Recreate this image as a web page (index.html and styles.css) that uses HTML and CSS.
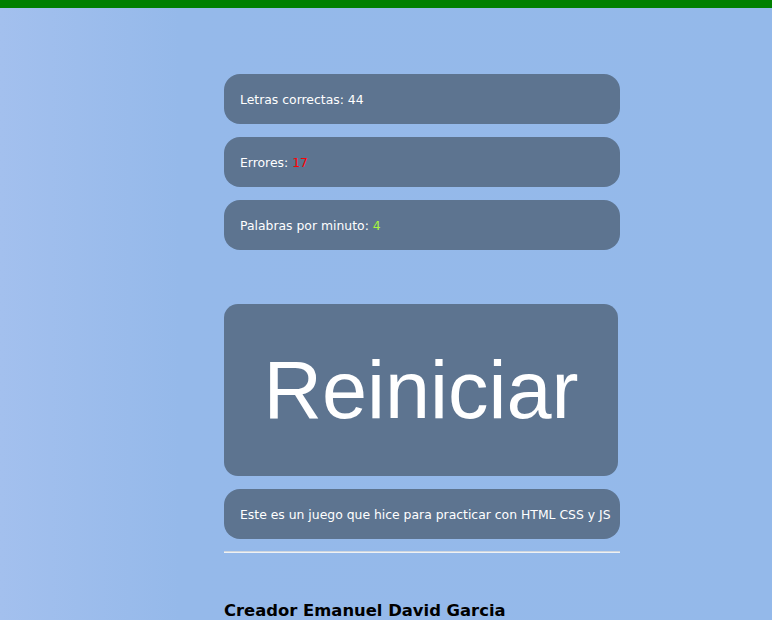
FILE: index.html
```html
<!DOCTYPE html>
<html>
<head>
    <meta charset="utf-8" />
    <title>Juego de escritura</title>
    <link rel="stylesheet" href="styles.css">
</head>
<body>
    <div class="topbar"></div>

    <main class="game">
        <div class="stat">Letras correctas: <span id="correctas">44</span></div>
        <div class="stat">Errores: <span id="errores" class="bad">17</span></div>
        <div class="stat">Palabras por minuto: <span id="ppm" class="good">4</span></div>

        <button class="restart" id="reiniciar">Reiniciar</button>

        <div class="stat info">Este es un juego que hice para practicar con HTML CSS y JS</div>
        <hr>
        <h3 class="author">Creador Emanuel David Garcia</h3>
    </main>
</body>
</html>
```

FILE: styles.css
```css
body {
    margin: 0;
    font-family: "Comic Sans MS", "DejaVu Sans", sans-serif;
    background: linear-gradient(to right, #a3c0ee 0, #95b9ea 180px, #94b9ea 100%);
    min-height: 100vh;
}

.topbar {
    height: 8px;
    background-color: #008000;
}

.game {
    width: 396px;
    margin-left: 224px;
    padding-top: 66px;
    display: flex;
    flex-direction: column;
}

.stat {
    height: 50px;
    box-sizing: border-box;
    padding: 0 16px;
    display: flex;
    align-items: center;
    background-color: #5d7490;
    border-radius: 16px;
    color: #fff;
    font-size: 12.4px;
    white-space: pre;
    margin-bottom: 13px;
}

.bad {
    color: #ff0000;
}

.good {
    color: #a8f53c;
}

.restart {
    width: 394px;
    height: 172px;
    margin-top: 41px;
    margin-bottom: 13px;
    border: none;
    border-radius: 14px;
    background-color: #5d7490;
    color: #fff;
    font-family: "Liberation Sans", Arial, sans-serif;
    font-size: 81px;
    padding: 0;
    cursor: pointer;
}

.info {
    margin-bottom: 0;
}

hr {
    width: 100%;
    margin: 12px 0 0;
    border: none;
    border-top: 1px solid #cfd6de;
    border-bottom: 1px solid #eef1f5;
}

.author {
    margin: 48px 0 0;
    font-size: 16.4px;
    font-weight: bold;
    color: #000;
}
```
